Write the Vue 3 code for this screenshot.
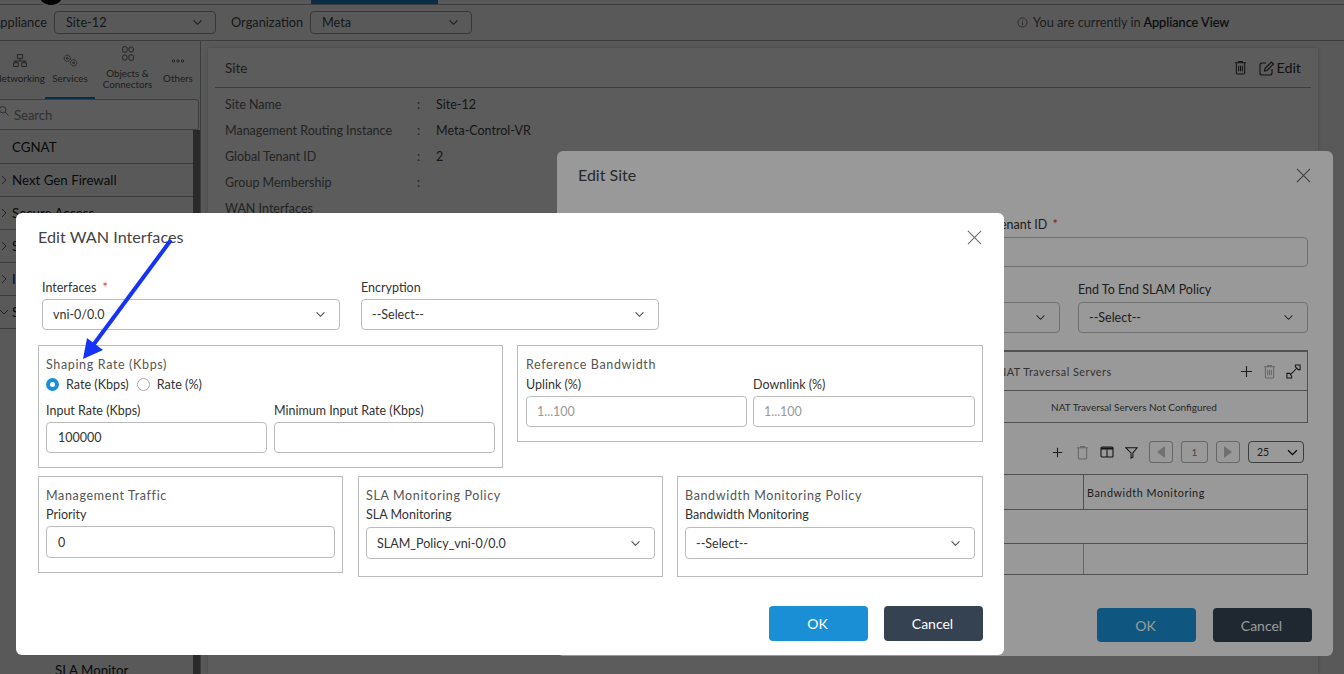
<script setup>
const navItems = [
  { label: 'Networking', width: 51, icon: 'net' },
  { label: 'Services', width: 50, icon: 'svc', active: true },
  { label: 'Objects &\nConnectors', width: 65, icon: 'obj' },
  { label: 'Others', width: 36, icon: 'dots' },
]
const sideRows = [
  { label: 'Next Gen Firewall', caret: 'right' },
  { label: 'Secure Access', caret: 'right' },
  { label: 'SD-WAN', caret: 'right' },
  { label: 'IP Security', caret: 'right' },
  { label: 'System', caret: 'down' },
]
const siteRows = [
  ['Site Name', 'Site-12'],
  ['Management Routing Instance', 'Meta-Control-VR'],
  ['Global Tenant ID', '2'],
  ['Group Membership', ''],
]
</script>

<template>
  <div class="page">
    <header class="topline">
      <span class="logo"></span>
      <span class="toptab"></span>
    </header>
    <div class="context">
      <span class="ctx-label appliance">Appliance</span>
      <div class="ctx-select">Site-12<svg class="chev" viewBox="0 0 12 8"><path d="M1.5 1.5 6 6l4.5-4.5" /></svg></div>
      <span class="ctx-label org">Organization</span>
      <div class="ctx-select">Meta<svg class="chev" viewBox="0 0 12 8"><path d="M1.5 1.5 6 6l4.5-4.5" /></svg></div>
      <div class="view-note">
        <svg class="info" viewBox="0 0 12 12"><circle cx="6" cy="6" r="5" /><path d="M6 5.2V9M6 3v1" /></svg>
        <span>You are currently in <b>Appliance View</b></span>
      </div>
    </div>
    <div class="main">
      <aside class="side">
        <nav class="nav">
          <div v-for="n in navItems" :key="n.label" class="nav-item" :class="{ on: n.active }" :style="{ width: n.width + 'px' }">
            <svg class="nav-icon" :class="n.icon" viewBox="0 0 20 20">
              <g v-if="n.icon === 'net'"><rect x="7" y="3" width="6" height="4" /><rect x="3" y="12" width="5" height="4" /><rect x="12" y="12" width="5" height="4" /><path d="M10 7v3M3 10h14M5.5 10v2M14.500 10v2" /></g>
              <g v-else-if="n.icon === 'svc'"><circle cx="7" cy="7" r="3.500" stroke-dasharray="2 .6" /><circle cx="7" cy="7" r="1" /><circle cx="14" cy="12" r="3.500" stroke-dasharray="2 .6" /><circle cx="14" cy="12" r="1" /></g>
              <g v-else-if="n.icon === 'obj'"><rect x="4" y="2" width="5" height="6" rx="1.500" /><rect x="11" y="2" width="5" height="6" rx="2.500" /><rect x="4" y="11" width="5" height="6" rx="2.500" /><rect x="11" y="11" width="5" height="6" rx="1.500" /></g>
              <g v-else><circle cx="5" cy="10" r="1.300" /><circle cx="10" cy="10" r="1.300" /><circle cx="15" cy="10" r="1.300" /></g>
            </svg>
            <span class="nav-text">{{ n.label }}</span>
          </div>
        </nav>
        <div class="search">
          <svg class="search-icon" viewBox="0 0 12 12"><circle cx="4" cy="4" r="3.500" /><path d="m6.500 6.500 4 4" /></svg>
          Search
        </div>
        <div class="side-body">
          <div class="side-list">
            <div class="side-row plain">CGNAT</div>
            <div v-for="r in sideRows" :key="r.label" class="side-row">
              <svg class="caret" viewBox="0 0 8 10"><path v-if="r.caret === 'right'" d="m2 1 4 4-4 4" /><path v-else d="m0 3 4 4 4-4" /></svg>
              {{ r.label }}
            </div>
            <div class="side-fill"></div>
            <div class="side-sub">SLA Monitor</div>
          </div>
          <div class="scrollbar"></div>
        </div>
      </aside>
      <section class="card">
        <div class="card-head">
          <span>Site</span>
          <div class="card-actions">
            <svg class="trash dark" viewBox="0 0 14 16"><path d="M1 3h12M5 3V1.500h4V3M2.500 3v11a1 1 0 0 0 1 1h7a1 1 0 0 0 1-1V3M5 6v6M7 6v6M9 6v6" /></svg>
            <svg class="edit-icon" viewBox="0 0 16 16"><path d="M7 3H3a2 2 0 0 0-2 2v8a2 2 0 0 0 2 2h8a2 2 0 0 0 2-2V9" /><path d="M6 8.500 12.500 2l2 2L8 10.500l-2.500.5z" /></svg>
            <span class="edit">Edit</span>
          </div>
        </div>
        <div class="site-list">
          <div v-for="r in siteRows" :key="r[0]" class="site-row">
            <span class="site-key">{{ r[0] }}</span><span class="site-sep">:</span><span class="site-val">{{ r[1] }}</span>
          </div>
          <div class="site-row"><span class="site-key">WAN Interfaces</span></div>
        </div>
      </section>
    </div>

    <div class="overlay"></div>

    <div class="modal site-modal">
      <div class="site-title">Edit Site</div>
      <svg class="close back" viewBox="0 0 16 16"><path d="m1 1 14 14M15 1 1 15" /></svg>
      <div class="site-form">
        <div class="tenant">
          <div class="lbl">Global Tenant ID <i>*</i></div>
          <div class="ctl"></div>
        </div>
        <div class="site-selects">
          <div class="col-mid">
            <div class="lbl">Controller</div>
            <div class="ctl sel">--Select--<svg class="chev" viewBox="0 0 12 8"><path d="M1.5 1.5 6 6l4.5-4.5" /></svg></div>
          </div>
          <div class="col-end">
            <div class="lbl">End To End SLAM Policy</div>
            <div class="ctl sel">--Select--<svg class="chev" viewBox="0 0 12 8"><path d="M1.5 1.5 6 6l4.5-4.5" /></svg></div>
          </div>
        </div>
        <div class="nat">
          <div class="nat-head">
            <span class="nat-title">NAT Traversal Servers</span>
            <svg class="plus" viewBox="0 0 14 14"><path d="M7 1v12M1 7h12" /></svg>
            <svg class="trash faint" viewBox="0 0 14 16"><path d="M1 3h12M5 3V1.500h4V3M2.500 3v11a1 1 0 0 0 1 1h7a1 1 0 0 0 1-1V3M5 6v6M7 6v6M9 6v6" /></svg>
            <svg class="expand" viewBox="0 0 16 16"><path d="M10 1h5v5h-2L10 3zM1 10h3l2 3v2H1zM4.500 11.500 12 4" /></svg>
          </div>
          <div class="nat-body">NAT Traversal Servers Not Configured</div>
        </div>
        <div class="toolbar">
          <svg class="plus tool" viewBox="0 0 14 14"><path d="M7 2v10M2 7h10" /></svg>
          <svg class="trash faint tool" viewBox="0 0 14 16"><path d="M1 3h12M5 3V1.500h4V3M2.500 3v11a1 1 0 0 0 1 1h7a1 1 0 0 0 1-1V3" /></svg>
          <svg class="columns tool" viewBox="0 0 14 12"><rect x="1" y="1" width="12" height="10" rx="1" /><path d="M7 3.500V11" /><path class="thick" d="M1 2.500h12" /></svg>
          <svg class="filter tool" viewBox="0 0 14 14"><path d="M1 2h12L8.500 7.500V12L6.500 13V7.500z" /></svg>
          <div class="pager"><span class="tri left"></span></div>
          <div class="pager page-no">1</div>
          <div class="pager"><span class="tri right"></span></div>
          <div class="size">25<svg class="chev bold" viewBox="0 0 12 8"><path d="M1 1.500 6 6.500l5-5" /></svg></div>
        </div>
        <div class="tbl">
          <div class="tr head"><div class="td a"></div><div class="td b">Bandwidth Monitoring</div></div>
          <div class="tr mid"><div class="td a"></div><div class="td b none"></div></div>
          <div class="tr last"><div class="td a"></div><div class="td b"></div></div>
        </div>
      </div>
      <div class="actions site-actions">
        <button class="btn ok">OK</button>
        <button class="btn cancel">Cancel</button>
      </div>
    </div>

    <div class="overlay"></div>

    <div class="modal wan-modal">
      <div class="wan-title">Edit WAN Interfaces</div>
      <svg class="close" viewBox="0 0 16 16"><path d="m1 1 14 14M15 1 1 15" /></svg>
      <div class="top-fields">
        <div class="top-field">
          <div class="lbl">Interfaces <i class="gap">*</i></div>
          <div class="ctl sel">vni-0/0.0<svg class="chev" viewBox="0 0 12 8"><path d="M1.500 1.500 6 6l4.500-4.500" /></svg></div>
        </div>
        <div class="top-field">
          <div class="lbl">Encryption</div>
          <div class="ctl sel">--Select--<svg class="chev" viewBox="0 0 12 8"><path d="M1.500 1.500 6 6l4.500-4.500" /></svg></div>
        </div>
      </div>
      <div class="box-row first">
        <div class="box shaping">
          <div class="box-title">Shaping Rate (Kbps)</div>
          <div class="radios">
            <span class="radio checked"></span><span class="radio-text">Rate (Kbps)</span>
            <span class="radio"></span><span class="radio-text">Rate (%)</span>
          </div>
          <div class="pair">
            <div class="pair-item"><div class="lbl">Input Rate (Kbps)</div><div class="ctl">100000</div></div>
            <div class="pair-item"><div class="lbl">Minimum Input Rate (Kbps)</div><div class="ctl"></div></div>
          </div>
        </div>
        <div class="box reference">
          <div class="box-title">Reference Bandwidth</div>
          <div class="pair">
            <div class="pair-item"><div class="lbl">Uplink (%)</div><div class="ctl ph">1...100</div></div>
            <div class="pair-item"><div class="lbl">Downlink (%)</div><div class="ctl ph">1...100</div></div>
          </div>
        </div>
      </div>
      <div class="box-row second">
        <div class="box third short">
          <div class="box-title">Management Traffic</div>
          <div class="lbl">Priority</div>
          <div class="ctl">0</div>
        </div>
        <div class="box third">
          <div class="box-title">SLA Monitoring Policy</div>
          <div class="lbl">SLA Monitoring</div>
          <div class="ctl sel">SLAM_Policy_vni-0/0.0<svg class="chev" viewBox="0 0 12 8"><path d="M1.500 1.500 6 6l4.500-4.500" /></svg></div>
        </div>
        <div class="box third">
          <div class="box-title">Bandwidth Monitoring Policy</div>
          <div class="lbl">Bandwidth Monitoring</div>
          <div class="ctl sel">--Select--<svg class="chev" viewBox="0 0 12 8"><path d="M1.500 1.500 6 6l4.500-4.500" /></svg></div>
        </div>
      </div>
      <div class="actions wan-actions">
        <button class="btn ok">OK</button>
        <button class="btn cancel">Cancel</button>
      </div>
    </div>

    <svg class="arrow" viewBox="0 0 1344 674">
      <path d="M171 240 94 344" />
      <polygon points="83,359 87,338 103,350" />
    </svg>
  </div>
</template>

<style scoped>
* { box-sizing: border-box; }
.page {
  position: relative;
  width: 1344px;
  height: 674px;
  overflow: hidden;
  background: #f8f9fb;
  font-family: Lato, "Noto Sans", sans-serif;
  font-size: 12.5px;
  color: #333;
  display: flex;
  flex-direction: column;
}
.topline { height: 5px; border-bottom: 1px solid #aaa; position: relative; flex: none; }
.logo { position: absolute; left: 38px; top: -21px; width: 26px; height: 26px; border-radius: 50%; background: #000; box-shadow: 0 0 0 2px #f8f9fb; }
.toptab { position: absolute; left: 311px; top: 0; width: 127px; height: 4px; background: #1481c5; }
.context { height: 36px; flex: none; display: flex; align-items: center; border-bottom: 1px solid #aaa; padding-bottom: 1px; }
.ctx-label { font-size: 12.800px; color: #444; }
.appliance { width: 47px; margin-right: 7px; direction: rtl; white-space: nowrap; overflow: hidden; }
.org { margin: 0 6px 0 15px; width: 73px; }
.ctx-select { width: 162px; height: 23px; border: 1px solid #999; border-radius: 4px; padding: 0 12px 0 11px; display: flex; align-items: center; justify-content: space-between; font-size: 12.700px; color: #444; }
.view-note { margin-left: 545px; display: flex; align-items: center; gap: 5px; font-size: 12.700px; color: #555; white-space: nowrap; }
.view-note b { font-weight: 400; color: #222; -webkit-text-stroke: .2px #222; }
.info { width: 11px; height: 11px; fill: none; stroke: #777; }
.chev { width: 11px; height: 7px; fill: none; stroke: #444; stroke-width: 1.200; flex: none; }
.main { flex: 1; display: flex; min-height: 0; }
.side { width: 201px; border-right: 1px solid #aaa; display: flex; flex-direction: column; flex: none; }
.nav { height: 58px; display: flex; margin-left: -6px; flex: none; }
.nav-item { display: flex; flex-direction: column; align-items: center; justify-content: center; height: 58px; padding-bottom: 4px; flex: none; }
.nav-item.on { border-bottom: 2px solid #1481c5; padding-bottom: 2px; }
.nav-icon { width: 18px; height: 18px; fill: none; stroke: #444; stroke-width: .9; flex: none; }
.nav-icon.obj { transform: translateY(-2px); }
.nav-text { font-size: 9.800px; line-height: 11px; text-align: center; white-space: pre-line; color: #555; margin-top: 3px; }
.search { height: 31px; flex: none; margin-left: -5px; width: 204px; border: 1px solid #aaa; border-radius: 3px; display: flex; align-items: center; padding-left: 18px; color: #888; font-size: 13px; background: #fff; position: relative; }
.search-icon { position: absolute; left: 3px; top: 6px; width: 11px; height: 11px; fill: none; stroke: #777; }
.side-body { flex: 1; display: flex; min-height: 0; }
.side-list { flex: 1; display: flex; flex-direction: column; min-width: 0; }
.side-row { height: 33px; flex: none; border-bottom: 1px solid #aaa; display: flex; align-items: center; padding-left: 12px; position: relative; font-size: 13.300px; color: #1c1c1c; }
.side-row.plain { height: 34px; }
.caret { position: absolute; left: 0; top: 11px; width: 8px; height: 10px; fill: none; stroke: #666; }
.side-fill { flex: 1; }
.side-sub { height: 11px; padding-left: 55px; font-size: 13.300px; line-height: 14px; color: #1c1c1c; flex: none; }
.scrollbar { width: 7px; background: #777; flex: none; }
.card { width: 1110px; margin: 7px 0 0 7px; background: #fff; padding: 0 7px; box-shadow: 0 0 4px rgba(0,0,0,.2); }
.card-head { height: 40px; border-bottom: 1px solid #aaa; display: flex; align-items: center; padding-left: 10px; font-size: 13.500px; color: #555; }
.card-actions { margin-left: auto; display: flex; align-items: center; padding-right: 10px; }
.trash { width: 13px; height: 15px; fill: none; stroke: #333; stroke-width: 1.100; flex: none; }
.trash.faint { stroke: #aaa; }
.edit-icon { width: 16px; height: 16px; fill: none; stroke: #333; stroke-width: 1.100; margin: 0 1px 0 12px; }
.edit { font-size: 14.300px; color: #333; }
.site-list { padding-top: 3px; }
.site-row { height: 26px; display: flex; align-items: center; padding-left: 10px; font-size: 12.500px; color: #666; }
.site-key { width: 192px; }
.site-sep { width: 19px; }
.site-val { color: #444; }

.overlay { position: absolute; inset: 0; background: rgba(0,0,0,.4); }
.modal { position: absolute; background: #fff; border-radius: 6px; }
.close { position: absolute; width: 15px; height: 15px; fill: none; stroke: #666; stroke-width: 1.100; }
.lbl { font-size: 12.500px; color: #333; line-height: 14px; white-space: nowrap; }
.lbl i { color: #e0314b; font-style: normal; margin-left: 2px; }
.lbl i.gap { margin-left: 3px; }
.ctl { border: 1px solid #bbb; border-radius: 4px; height: 31px; padding: 0 11px; display: flex; align-items: center; font-size: 12.500px; color: #333; background: #fff; }
.ctl.sel { justify-content: space-between; padding: 0 13px 0 10px; white-space: nowrap; }
.ctl.ph { color: #999; padding-left: 10px; }

.site-modal { left: 557px; top: 151px; width: 776px; height: 505px; }
.site-title { position: absolute; left: 21px; top: 14px; font-size: 16px; color: #444; }
.close.back { right: 22px; top: 17px; }
.site-form { position: absolute; left: 21px; right: 25px; top: 67px; }
.tenant { margin-left: 378px; }
.tenant .ctl { height: 30px; }
.tenant .lbl { margin-bottom: 5px; }
.site-selects { display: flex; gap: 18px; margin-top: 16px; }
.site-selects .lbl { margin-bottom: 5px; }
.col-mid { width: 230px; margin-left: 252px; flex: none; }
.col-end { flex: 1; }
.nat { margin: 17px 0 0 378px; height: 73px; border: 1px solid #888; border-top-width: 2px; }
.nat-head { height: 39px; border-bottom: 1px solid #888; display: flex; align-items: center; padding-left: 41px; gap: 10px; }
.nat-title { font-size: 10.800px; letter-spacing: .5px; color: #555; margin-right: auto; white-space: nowrap; }
.plus { width: 13px; height: 13px; fill: none; stroke: #333; stroke-width: 1.200; flex: none; }
.expand { width: 15px; height: 15px; fill: none; stroke: #222; stroke-width: 1.100; margin-right: 6.500px; flex: none; }
.nat-body { height: 31px; display: flex; align-items: center; justify-content: center; font-size: 10px; color: #444; padding-left: 4px; white-space: nowrap; }
.toolbar { display: flex; align-items: center; height: 24px; margin-top: 17px; justify-content: flex-end; padding-right: 4px; gap: 8px; }
.tool { margin-right: 3px; }
.plus.tool { margin-right: 4px; }
.columns { width: 14px; height: 12px; fill: none; stroke: #222; stroke-width: 1.100; flex: none; }
.columns .thick { stroke-width: 2; }
.filter { width: 13px; height: 13px; fill: none; stroke: #222; stroke-width: 1.100; flex: none; }
.pager { width: 24px; height: 22px; border: 1px solid #aaa; border-radius: 3px; display: flex; align-items: center; justify-content: center; font-size: 10px; color: #777; }
.page-no { width: 27px; }
.tri { width: 0; height: 0; border-top: 6px solid transparent; border-bottom: 6px solid transparent; }
.tri.left { border-right: 8px solid #bbb; }
.tri.right { border-left: 8px solid #bbb; }
.size { width: 56px; height: 22px; border: 1px solid #666; border-radius: 4px; display: flex; align-items: center; justify-content: space-between; padding: 0 5px 0 8px; font-size: 10.500px; color: #333; }
.chev.bold { stroke: #111; stroke-width: 1.500; }
.tbl { margin: 10px 0 0 378px; border: 1px solid #888; border-bottom: 0; }
.tr { display: flex; border-bottom: 1px solid #888; }
.tr.head { height: 35px; }
.tr.mid { height: 34px; }
.tr.last { height: 31px; }
.td.a { flex: 1; }
.td.b { width: 224px; border-left: 1px solid #888; font-size: 10.800px; letter-spacing: .55px; color: #333; display: flex; align-items: center; padding-left: 3px; white-space: nowrap; }
.td.b.none { border-left: 0; }
.td.b:empty:not(.none) { border-left-color: #aaa; }
.actions { position: absolute; display: flex; }
.site-actions { right: 21px; top: 457px; gap: 17px; }
.btn { width: 99px; height: 35px; border: 0; border-radius: 4px; font-family: inherit; font-size: 14px; color: #fff; padding: 0 2px 0 0; }
.site-actions .btn { height: 34px; }
.btn.ok { background: #1a8fd6; }
.btn.cancel { background: #354252; }

.wan-modal { left: 16px; top: 213px; width: 988px; height: 442px; padding: 0 21px 0 22px; }
.wan-title { position: absolute; left: 22px; top: 14px; font-size: 16.200px; color: #444; }
.wan-modal .close { right: 22px; top: 17px; }
.top-fields { display: flex; gap: 21px; padding: 68px 0 0 4px; }
.top-field { width: 298px; }
.top-field .lbl { margin-bottom: 4px; }
.box-row { display: flex; align-items: flex-start; }
.box-row.first { margin-top: 15px; gap: 14px; }
.box-row.second { margin-top: 8px; gap: 15px; }
.box { border: 1px solid #bbb; padding: 12px 7px 0; flex: none; }
.box-title { font-size: 12.500px; letter-spacing: .65px; line-height: 14px; color: #555; white-space: nowrap; }
.shaping { width: 465px; height: 123px; }
.reference { width: 466px; height: 97px; padding-left: 8px; }
.radios { display: flex; align-items: center; height: 14px; margin-top: 5px; font-size: 12.600px; }
.radio { width: 13px; height: 13px; border: 1px solid #aaa; border-radius: 50%; flex: none; }
.radio.checked { border: 4px solid #1a8fd6; }
.radio-text { margin: 0 8px 0 7px; color: #333; }
.pair { display: flex; gap: 7px; margin-top: 13px; }
.reference .pair { margin-top: 6px; gap: 6px; }
.pair-item { flex: 1; min-width: 0; }
.reference .pair-item:first-child { flex: none; width: 221px; }
.pair-item .lbl { margin-bottom: 4px; }
.third { width: 305px; height: 101px; }
.third.short { height: 97px; }
.third:last-child { width: 306px; margin-left: -1px; }
.third .lbl { margin-top: 5px; margin-bottom: 5px; }
.third.short .lbl { margin-bottom: 4px; }
.third .ctl { height: 32px; }
.wan-actions { right: 21px; top: 393px; gap: 16px; }

.arrow { position: absolute; inset: 0; width: 1344px; height: 674px; pointer-events: none; }
.arrow path { stroke: #1533f5; stroke-width: 4; fill: none; }
.arrow polygon { fill: #1533f5; }
</style>
